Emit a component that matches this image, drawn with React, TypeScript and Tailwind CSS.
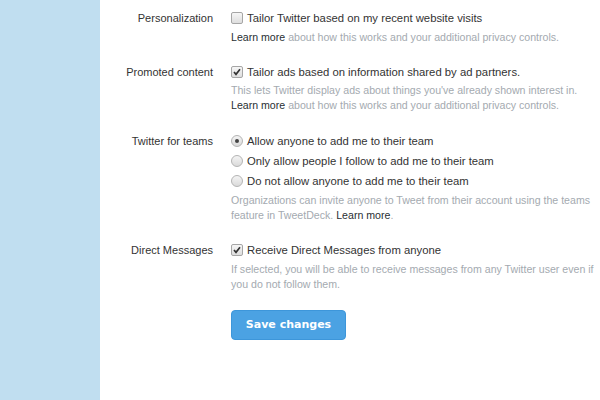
import React from 'react';

function Box({ checked }: { checked?: boolean }) {
    return (
        <span className="w-[12px] h-[12px] shrink-0 border border-[#a6a6a6] rounded-[2px] bg-gradient-to-b from-[#f6f6f6] to-[#dedede] flex items-center justify-center">
            {checked && (
                <svg width="8" height="8" viewBox="0 0 8 8">
                    <path d="M1 4 L3 6.3 L7 1.3" fill="none" stroke="#333" strokeWidth="1.7" />
                </svg>
            )}
        </span>
    );
}

function Radio({ checked }: { checked?: boolean }) {
    return (
        <span className="w-[12px] h-[12px] shrink-0 border border-[#b4b4b4] rounded-full bg-gradient-to-b from-[#f4f4f4] to-[#dadada] flex items-center justify-center">
            {checked && <span className="w-[4px] h-[4px] rounded-full bg-[#444]" />}
        </span>
    );
}

function Label({ children }: { children: React.ReactNode }) {
    return <div className="text-right text-[11px] leading-[16px] text-[#333]">{children}</div>;
}

function Option({ children, control }: { children: React.ReactNode; control: React.ReactNode }) {
    return (
        <div className="flex items-center gap-[4px] h-[16px] text-[11.3px] text-[#333]">
            {control}
            <span>{children}</span>
        </div>
    );
}

function LearnMore() {
    return (
        <p className="text-[10.6px] leading-[15px] text-[#a4aab0]">
            <span className="text-[#292f33]">Learn more</span> about how this works and your additional privacy controls.
        </p>
    );
}

export default function App() {
    return (
        <div className="w-[600px] h-[400px] flex bg-white overflow-hidden" style={{ fontFamily: '"Liberation Sans", Arial, sans-serif' }}>
            <div className="w-[100px] bg-[#c0def0] shrink-0" />
            <div className="flex-1 pt-[10px]">
                <div className="grid grid-cols-[113px_1fr] gap-x-[18px]">
                    {/* Personalization */}
                    <Label>Personalization</Label>
                    <div className="flex flex-col gap-[4px] mb-[19px]">
                        <Option control={<Box />}>Tailor Twitter based on my recent website visits</Option>
                        <LearnMore />
                    </div>

                    {/* Promoted content */}
                    <Label>Promoted content</Label>
                    <div className="flex flex-col gap-[3px] mb-[20px]">
                        <Option control={<Box checked />}>Tailor ads based on information shared by ad partners.</Option>
                        <div>
                            <p className="text-[10.6px] leading-[15px] text-[#a4aab0]">This lets Twitter display ads about things you've already shown interest in.</p>
                            <LearnMore />
                        </div>
                    </div>

                    {/* Twitter for teams */}
                    <Label>Twitter for teams</Label>
                    <div className="flex flex-col mb-[19px]">
                        <div className="flex flex-col gap-[4px]">
                            <Option control={<Radio checked />}>Allow anyone to add me to their team</Option>
                            <Option control={<Radio />}>Only allow people I follow to add me to their team</Option>
                            <Option control={<Radio />}>Do not allow anyone to add me to their team</Option>
                        </div>
                        <p className="mt-[4px] text-[10.6px] leading-[15px] text-[#a4aab0]">
                            Organizations can invite anyone to Tweet from their account using the teams
                            <br />
                            feature in TweetDeck. <span className="text-[#292f33]">Learn more</span>.
                        </p>
                    </div>

                    {/* Direct Messages */}
                    <Label>Direct Messages</Label>
                    <div className="flex flex-col items-start gap-[4px]">
                        <Option control={<Box checked />}>Receive Direct Messages from anyone</Option>
                        <p className="text-[10.6px] leading-[15px] text-[#a4aab0]">
                            If selected, you will be able to receive messages from any Twitter user even if
                            <br />
                            you do not follow them.
                        </p>
                        <button
                            className="mt-[14px] w-[115px] h-[30px] rounded-[4px] bg-[#4ba2e3] border border-[#3d96da] text-white text-[11px] font-bold"
                            style={{ fontFamily: '"DejaVu Sans", Verdana, sans-serif' }}
                        >
                            Save changes
                        </button>
                    </div>
                </div>
            </div>
        </div>
    );
}
